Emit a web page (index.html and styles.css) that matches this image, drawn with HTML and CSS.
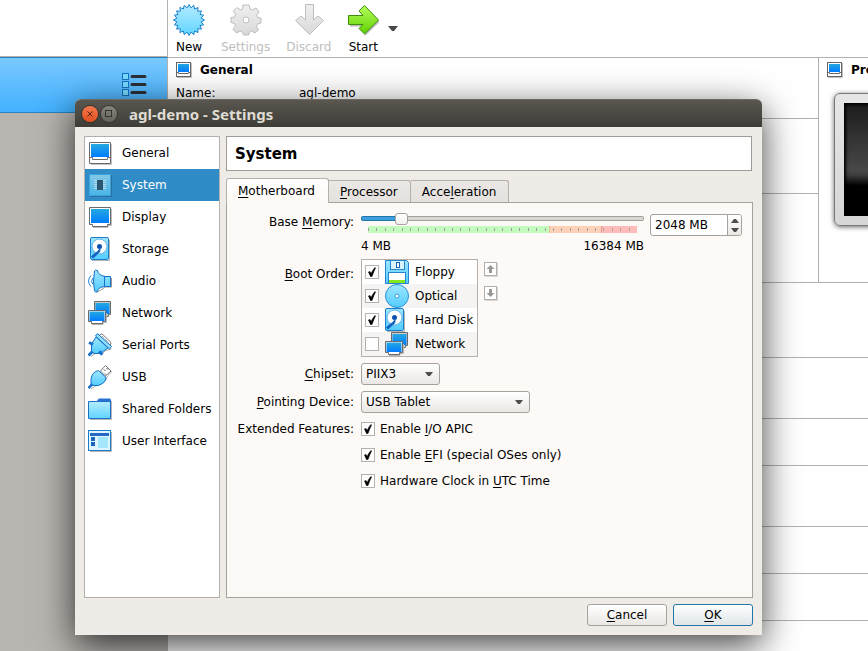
FILE: index.html
```html
<!DOCTYPE html>
<html lang="en">
<head>
<meta charset="utf-8">
<title>agl-demo - Settings</title>
<link rel="stylesheet" href="styles.css">
</head>
<body>
<svg class="defs" aria-hidden="true">
  <defs>
    <linearGradient id="screen" x1="0" y1="0" x2="0" y2="1"><stop offset="0" stop-color="#25a8e0"/><stop offset="1" stop-color="#007cff"/></linearGradient>
    <linearGradient id="sky" x1="0" y1="0" x2="0" y2="1"><stop offset="0" stop-color="#9fe6ff"/><stop offset="1" stop-color="#52ccff"/></linearGradient>
    <linearGradient id="pale" x1="0" y1="0" x2="0" y2="1"><stop offset="0" stop-color="#b4ecff"/><stop offset="1" stop-color="#60d4ff"/></linearGradient>
    <linearGradient id="lime" x1="0" y1="0" x2="0" y2="1"><stop offset="0" stop-color="#b6ff5c"/><stop offset="1" stop-color="#5fd000"/></linearGradient>
    <linearGradient id="ash" x1="0" y1="0" x2="0" y2="1"><stop offset="0" stop-color="#efefef"/><stop offset="1" stop-color="#d9d9d9"/></linearGradient>
  </defs>
  <symbol id="i-general" viewBox="0 0 24 24">
    <path d="M3 23.500H23.500V3" fill="none" stroke="#c4c4c4"/>
    <path d="M1.500 1.500H22.500V22.500H1.500Z" fill="#fff" stroke="#6a6a6a"/>
    <rect x="3" y="3" width="18" height="13" fill="url(#screen)"/>
    <path d="M1.500 16.500H4.500V18.500H19.500V16.500H22.500" fill="none" stroke="#6a6a6a"/>
  </symbol>
  <symbol id="i-system" viewBox="0 0 24 24">
    <rect x="2" y="2" width="22" height="22" fill="#2b6fa0"/>
    <rect x="1.500" y="1.500" width="21" height="21" fill="url(#sky)" fill-opacity=".75" stroke="#38a6dc"/>
    <path d="M6 7.500H18M6 9.500H18M6 11.500H18M6 13.500H18M6 15.500H18" stroke="#b9dcec"/>
    <rect x="9" y="7" width="6" height="10" fill="#2c5570"/>
  </symbol>
  <symbol id="i-display" viewBox="0 0 24 24">
    <path d="M5 22.500H20V20.500H23.500V4" fill="none" stroke="#bcbcbc"/>
    <path d="M1.500 2.500H22.500V19.500H19.500V21.500H4.500V19.500H1.500Z" fill="#fff" stroke="#6a6a6a"/>
    <rect x="3" y="4" width="18" height="14" fill="url(#screen)"/>
  </symbol>
  <symbol id="i-storage" viewBox="0 0 24 24">
    <path d="M4 23.500H21.500V3" fill="none" stroke="#b5b5b5"/>
    <rect x="2.500" y=".500" width="18" height="22" rx="1.500" fill="url(#sky)" stroke="#1c7cc8"/>
    <circle cx="11.500" cy="9.500" r="7.500" fill="#fff" stroke="#5ab4e8"/>
    <circle cx="11.500" cy="9.500" r="2.500" fill="#0c50b0"/>
    <path d="M12 11.500Q13 15 9 17.500L5 21 3.500 19.500 7.500 16Q10 15 12 11.500Z" fill="#1764c0" stroke="#1764c0"/>
  </symbol>
  <symbol id="i-audio" viewBox="0 0 24 24">
    <path d="M3 6.500Q-2 12 3 17.500M5 9Q2 12 5 15.500" fill="none" stroke="#2484d8"/>
    <path d="M8.500 23.500L17.500 18H23.500V9" fill="none" stroke="#9a9a9a"/>
    <path d="M6.500 2Q7.500 .500 9.500 1.500Q10 6 17 7.500H22.500V17.500H17Q10 18 9.500 22.500Q7 23.500 6.500 22Q4.500 12 6.500 2Z" fill="url(#sky)" stroke="#1771c8"/>
    <path d="M16.500 7.500V17.500" stroke="#1771c8"/>
  </symbol>
  <symbol id="i-network" viewBox="0 0 24 24">
    <path d="M6.500 .500H22.500V13.500H20.500V15.500H8.500V13.500H6.500Z" fill="#ccc" stroke="#6a6a6a"/>
    <rect x="7.500" y="2" width="14" height="11" fill="url(#screen)"/>
    <path d="M4 23.500H15V21.500H18.500V12" fill="none" stroke="#b5b5b5"/>
    <path d="M.500 9.500H17.500V20.500H14.500V22.500H3.500V20.500H.500Z" fill="#fff" stroke="#6a6a6a"/>
    <rect x="1.500" y="10.500" width="15" height="9.500" fill="url(#screen)"/>
  </symbol>
  <symbol id="i-serial" viewBox="0 0 24 24">
    <path d="M3 23.500L7 20.500H14L18 17.500 23.500 16" fill="none" stroke="#aaa"/>
    <path d="M11 2.500L14 .800 23 9.500 22 13.500Z" fill="#fff" stroke="#777"/>
    <path d="M14 3L21 10" stroke="#777" stroke-dasharray="1 1"/>
    <path d="M8 4L20 15 14 19 11 20.500H6L3.500 18.500V11Z" fill="url(#sky)" stroke="#1771c8"/>
    <path d="M1 9.500L5 11.500M11 18.500L14.500 21.500" stroke="#1771c8" stroke-width="3"/>
    <path d="M9.500 .500L23.500 13.500 21.500 16 7.500 3Z" fill="#8fe0ff" stroke="#1771c8" stroke-linejoin="round"/>
    <path d="M.500 22.500L4.500 18.500" stroke="#1771c8" stroke-width="3"/>
  </symbol>
  <symbol id="i-usb" viewBox="0 0 24 24">
    <path d="M3 24L9 20Q18 18 19 12L24 6" fill="none" stroke="#b5b5b5"/>
    <path d="M12.500 6L17.500 .500 23 6 17.500 11Z" fill="#fff" stroke="#777"/>
    <path d="M16 4.500L17.500 6M18.500 3L20 4.500M17 8.500L18 9.500" stroke="#444"/>
    <path d="M10.500 5.500L18 12.500Q18 18 10 20.500H5L3 18.500V14Q4 7 10.500 5.500Z" fill="url(#sky)" stroke="#1771c8"/>
    <path d="M.500 23L4.500 19" stroke="#1771c8" stroke-width="2.500"/>
  </symbol>
  <symbol id="i-folder" viewBox="0 0 24 24">
    <path d="M2 22.500H23.500V4" fill="none" stroke="#b5b5b5"/>
    <path d="M9 5V3.500L11 1.500H22L23 3V6H9Z" fill="#2a72d0"/>
    <path d="M.500 4.500H22.500V21.500H.500Z" fill="url(#pale)" stroke="#1e6fca"/>
  </symbol>
  <symbol id="i-ui" viewBox="0 0 24 24">
    <path d="M2 22.500H23.500V3" fill="none" stroke="#b5b5b5"/>
    <rect x=".500" y="1.500" width="22" height="20" fill="#def6ff" stroke="#1d7bcc"/>
    <rect x="2" y="4" width="19" height="3" fill="#2668c4"/>
    <rect x="3" y="8" width="4" height="4" fill="#1f62c0"/><rect x="3" y="13" width="4" height="4" fill="#1f62c0"/>
    <rect x="10" y="8" width="10" height="11" fill="#a5e6ff"/>
  </symbol>
  <symbol id="i-floppy" viewBox="0 0 24 24">
    <path d="M.500 .500H21.500L23.500 2.500V23.500H.500Z" fill="url(#sky)" stroke="#2585d0"/>
    <rect x="5.500" y=".500" width="14" height="9" fill="#d9f6ff" stroke="#2585d0"/>
    <rect x="11.500" y="2.500" width="3" height="5" fill="#fff" stroke="#1764c0"/>
    <rect x="3.500" y="12.500" width="17" height="11" fill="#fff" stroke="#2585d0"/>
    <rect x="4" y="20" width="16" height="3" fill="#84e820"/>
  </symbol>
  <symbol id="i-optical" viewBox="0 0 24 24">
    <circle cx="12" cy="12" r="11.500" fill="url(#sky)" stroke="#2f8fd4"/>
    <circle cx="12" cy="12" r="2" fill="#fff" stroke="#3c9bd8"/>
  </symbol>
  <symbol id="i-details" viewBox="0 0 16 16">
    <path d="M1 15.500H15.500V1" fill="none" stroke="#c0c0c0"/>
    <rect x=".500" y=".500" width="14" height="14" fill="#fff" stroke="#666"/>
    <rect x="2" y="2" width="11" height="8" fill="url(#screen)"/>
    <path d="M.500 10.500H2.500V11.500H12.500V10.500H14.500" fill="none" stroke="#666"/>
  </symbol>
</svg>

<div class="manager">
  <aside class="machines">
    <div class="machines-top"></div>
    <div class="machine">
      <svg width="26" height="24" viewBox="0 0 26 24" aria-label="Details">
        <g fill="#7ddcff" stroke="#1274c4"><rect x="1.500" y=".500" width="6" height="6"/><rect x="1.500" y="8.500" width="6" height="6"/><rect x="1.500" y="16.500" width="6" height="6"/></g>
        <path d="M11 3.500H24M11 11.500H24M11 19.500H24" stroke="#2b2f33" stroke-width="3" stroke-linecap="round"/>
      </svg>
    </div>
  </aside>
  <main class="details">
    <nav class="toolbar">
      <button type="button">
        <svg width="32" height="32" viewBox="0 0 32 32"><path d="M16 .500L17.900 3.900 20.800 1.300 21.600 5 25.100 3.500 24.700 7.300 28.500 6.900 27 10.400 30.700 11.200 28.100 14.100 31.500 16 28.100 17.900 30.700 20.800 27 21.600 28.500 25.100 24.700 24.700 25.100 28.500 21.600 27 20.800 30.700 17.900 28.100 16 31.500 14.100 28.100 11.200 30.700 10.400 27 6.900 28.500 7.300 24.700 3.500 25.100 5 21.600 1.300 20.800 3.900 17.900 .500 16 3.900 14.100 1.300 11.200 5 10.400 3.500 6.900 7.300 7.300 6.900 3.500 10.400 5 11.200 1.300 14.100 3.900Z" fill="url(#pale)" stroke="#1c80cc" stroke-linejoin="round"/></svg>
        New
      </button>
      <button type="button" disabled>
        <svg width="32" height="32" viewBox="0 0 32 32"><path fill-rule="evenodd" d="M13 1H19L20 5 22.500 6 26 4 29 8 26.500 11 27.500 13.500 31 14V19L27.500 20 26.500 22.500 28.500 26 25 29 21.500 27 19.500 28 18.500 31H13.500L12.500 28 10 27 6.500 29 3 25.500 5.500 22 4.500 19.500 1 18.500V13.500L4.500 13 5.500 10.500 3.500 7 7 3.500 10.500 6 12.500 5ZM16 13A3 3 0 1 0 16 19 3 3 0 1 0 16 13Z" fill="url(#ash)" stroke="#bdbdbd" stroke-linejoin="round"/></svg>
        Settings
      </button>
      <button type="button" disabled>
        <svg width="32" height="32" viewBox="0 0 32 32"><path d="M12.500 .500H20.500V16L25 12 30.500 16.500 16.500 30.500 2.500 16.500 8 12 12.500 16Z" fill="url(#ash)" stroke="#bdbdbd"/></svg>
        Discard
      </button>
      <button type="button">
        <svg width="32" height="32" viewBox="0 0 32 32"><path d="M3 21.500H16M17.500 31L32 17" stroke="#bbb" stroke-width="2" fill="none"/><path d="M1.500 11.500H16L12 7 17.500 1.500 31.500 16 17.500 30 12 24.500 16 20.500H1.500Z" fill="url(#lime)" stroke="#3f8c0c"/></svg>
        Start
      </button>
      <button type="button" class="drop" aria-label="Start options"><svg width="10" height="6" viewBox="0 0 10 6"><path d="M0 0H10L6 5H4Z" fill="#4a4a4a"/></svg></button>
    </nav>
    <div class="top-panes">
      <div class="pane-col">
        <section class="pane general">
          <h2><svg width="16" height="16"><use href="#i-details"/></svg>General</h2>
          <dl><dt>Name:</dt><dd>agl-demo</dd></dl>
        </section>
        <section class="pane h75"></section>
        <section class="pane grow"></section>
      </div>
      <section class="preview">
        <h2><svg width="16" height="16"><use href="#i-details"/></svg>Preview</h2>
        <div class="monitor"><div class="monitor-screen"></div></div>
      </section>
    </div>
    <section class="pane h75"></section>
    <section class="pane h61"></section>
    <section class="pane h47"></section>
    <section class="pane h61"></section>
    <section class="pane h47"></section>
    <section class="pane h47"></section>
  </main>
</div>

<div class="dialog" role="dialog" aria-labelledby="dlg-title">
  <header class="titlebar">
    <button type="button" class="wm close" aria-label="Close"><svg width="16" height="16" viewBox="0 0 16 16"><path d="M5.500 5.500L10.500 10.500M10.500 5.500L5.500 10.500" stroke="#5c2210"/></svg></button>
    <button type="button" class="wm" aria-label="Maximize"><svg width="16" height="16" viewBox="0 0 16 16"><rect x="4.500" y="4.500" width="6" height="6" fill="none" stroke="#35342f"/></svg></button>
    <h1 id="dlg-title">agl-demo - Settings</h1>
  </header>
  <div class="dialog-body">
    <div class="columns">
      <nav class="categories">
        <a href="#general"><svg><use href="#i-general"/></svg>General</a>
        <a href="#system" class="selected"><svg><use href="#i-system"/></svg>System</a>
        <a href="#display"><svg><use href="#i-display"/></svg>Display</a>
        <a href="#storage"><svg><use href="#i-storage"/></svg>Storage</a>
        <a href="#audio"><svg><use href="#i-audio"/></svg>Audio</a>
        <a href="#network"><svg><use href="#i-network"/></svg>Network</a>
        <a href="#serial"><svg><use href="#i-serial"/></svg>Serial Ports</a>
        <a href="#usb"><svg><use href="#i-usb"/></svg>USB</a>
        <a href="#folders"><svg><use href="#i-folder"/></svg>Shared Folders</a>
        <a href="#ui"><svg><use href="#i-ui"/></svg>User Interface</a>
      </nav>
      <div class="page">
        <h2 class="page-title">System</h2>
        <div class="tabs" role="tablist">
          <button type="button" role="tab" class="tab active" aria-selected="true"><span><u>M</u>otherboard</span></button>
          <button type="button" role="tab" class="tab"><span><u>P</u>rocessor</span></button>
          <button type="button" role="tab" class="tab"><span>Acce<u>l</u>eration</span></button>
        </div>
        <form class="form">
          <label class="lbl lbl-mem" for="mem">Base <u>M</u>emory:</label>
          <div class="memory">
            <div class="mem-slider">
              <input type="range" id="mem" min="4" max="16384" value="2048">
              <div class="scale"><i class="ok"></i><i class="warn"></i><i class="bad"></i></div>
              <div class="bounds"><span>4 MB</span><span>16384 MB</span></div>
            </div>
            <div class="spin">
              <input type="text" value="2048 MB" aria-label="Base memory size">
              <div class="spin-buttons">
                <button type="button" aria-label="Increase"><svg width="8" height="5" viewBox="0 0 8 5"><path d="M0 5L3 1H5L8 5Z" fill="#4f4e4b"/></svg></button>
                <button type="button" aria-label="Decrease"><svg width="8" height="5" viewBox="0 0 8 5"><path d="M0 0L3 4H5L8 0Z" fill="#4f4e4b"/></svg></button>
              </div>
            </div>
          </div>

          <span class="lbl lbl-boot"><u>B</u>oot Order:</span>
          <div class="boot">
            <div class="boot-list">
              <label><input type="checkbox" checked><svg><use href="#i-floppy"/></svg>Floppy</label>
              <label><input type="checkbox" checked><svg><use href="#i-optical"/></svg>Optical</label>
              <label><input type="checkbox" checked><svg><use href="#i-storage" x="-2"/></svg>Hard Disk</label>
              <label><input type="checkbox"><svg><use href="#i-network"/></svg>Network</label>
            </div>
            <div class="movers">
              <button type="button" aria-label="Move up"><svg width="14" height="15" viewBox="0 0 14 15"><path d="M1 14.500H13.500V1" fill="none" stroke="#d8d6d4"/><rect x=".500" y=".500" width="12" height="13" fill="#fff" stroke="#b3afac"/><path d="M6.500 3L10.500 7H8V11H5V7H2.500Z" fill="#9a9794"/></svg></button>
              <button type="button" aria-label="Move down"><svg width="14" height="15" viewBox="0 0 14 15"><path d="M1 14.500H13.500V1" fill="none" stroke="#d8d6d4"/><rect x=".500" y=".500" width="12" height="13" fill="#fff" stroke="#b3afac"/><path d="M6.500 11L10.500 7H8V3H5V7H2.500Z" fill="#9a9794"/></svg></button>
            </div>
          </div>

          <label class="lbl" for="chipset"><u>C</u>hipset:</label>
          <select id="chipset" class="chipset"><option>PIIX3</option><option>ICH9</option></select>

          <label class="lbl" for="pointing"><u>P</u>ointing Device:</label>
          <select id="pointing" class="pointing"><option>USB Tablet</option><option>PS/2 Mouse</option></select>

          <span class="lbl">Extended Features:</span>
          <label class="check"><input type="checkbox" checked><span>Enable <u>I</u>/O APIC</span></label>
          <label class="check"><input type="checkbox" checked><span>Enable <u>E</u>FI (special OSes only)</span></label>
          <label class="check"><input type="checkbox" checked><span>Hardware Clock in <u>U</u>TC Time</span></label>
        </form>
      </div>
    </div>
    <footer class="actions">
      <button type="button" class="btn"><span><u>C</u>ancel</span></button>
      <button type="button" class="btn default"><span><u>O</u>K</span></button>
    </footer>
  </div>
</div>
</body>
</html>
```
FILE: styles.css
```css
* { box-sizing: border-box; }

body {
  margin: 0;
  height: 100vh;
  overflow: hidden;
  position: relative;
  font: 12px/14px "DejaVu Sans", sans-serif;
  color: #000;
  background: #fff;
}

button, input, select { font: inherit; color: inherit; margin: 0; padding: 0; }
button { background: none; border: 0; }
svg { display: block; flex: none; }
h1, h2, dl, dd { margin: 0; }
u { text-underline-offset: 2px; text-decoration-thickness: 1px; text-decoration-skip-ink: none; }
.defs { position: absolute; width: 0; height: 0; }

/* Manager window */
.manager { display: flex; min-height: 100vh; }
.machines { flex: 0 0 168px; background: #b8b4b0; display: flex; flex-direction: column; }
.machines-top { height: 57px; background: #fff; border-right: 1px solid #b4b0ac; border-bottom: 1px solid #b4b0ac; }
.machine {
  height: 56px;
  display: flex;
  justify-content: flex-end;
  padding: 15px 20px 0 0;
  background: linear-gradient(#79c8ff, #42b1ff);
  border-top: 1px solid #2982bd;
  border-bottom: 1px solid #2982bd;
  border-right: 1px solid #b4b0ac;
}
.details { flex: 1; min-width: 0; display: flex; flex-direction: column; }
.toolbar { display: flex; gap: 16px; height: 58px; padding: 4px 5px 0; border-bottom: 1px solid #b4b0ac; }
.toolbar button { min-width: 32px; display: flex; flex-direction: column; align-items: center; gap: 4px; height: 50px; white-space: nowrap; }
.toolbar button:disabled { color: #bebebe; }
.toolbar .drop { min-width: 10px; margin-left: -7px; padding-top: 22px; }

.top-panes { display: flex; height: 225px; border-bottom: 1px solid #b4b0ac; }
.pane-col { flex: 1; display: flex; flex-direction: column; border-right: 1px solid #b4b0ac; }
.pane { flex: none; border-bottom: 1px solid #b4b0ac; }
.pane.general { height: 61px; padding: 4px 8px; }
.pane.grow { flex: 1; border: 0; }
.h75 { height: 75px; }
.h61 { height: 61px; }
.h47 { height: 47px; }
.pane h2, .preview h2 { display: flex; align-items: center; gap: 8px; font-size: 12px; line-height: 16px; }
.pane dl { display: grid; grid-template-columns: 123px 1fr; margin-top: 8px; }
.preview { flex: 0 0 49px; overflow: hidden; padding: 4px 0 0 8px; }
.preview h2 { width: 120px; }
.monitor {
  width: 180px;
  height: 133px;
  margin: 15px 0 0 7px;
  padding: 9px;
  border: 1px solid #777;
  border-radius: 6px;
  background: linear-gradient(#e6e6e6, #d6d6d6);
  box-shadow: 0 1px 5px rgba(0, 0, 0, .6);
}
.monitor-screen {
  height: 100%;
  background: linear-gradient(#1c1c1c, #484848 60%, #3c3c3c 64%, #000 73%);
  box-shadow: inset 2px 2px 3px #000;
}

/* Settings dialog */
.dialog {
  position: absolute;
  top: 99px;
  left: 75px;
  right: 106px;
  bottom: 16px;
  display: flex;
  flex-direction: column;
  border-radius: 6px 6px 0 0;
  background: #efebe7;
  box-shadow: 0 10px 36px rgba(0, 0, 0, .75);
}
.titlebar {
  display: flex;
  align-items: center;
  gap: 3px;
  height: 28px;
  padding: 1px 7px 0;
  border-radius: 6px 6px 0 0;
  background: linear-gradient(#59574f, #3d3c37);
  border-top: 1px solid #6b6960;
}
.titlebar h1 { margin-left: 9px; font: bold 15px/18px "Noto Sans", sans-serif; color: #dfdbd2; }
.wm { width: 16px; height: 16px; border-radius: 50%; background: linear-gradient(#86847c, #65635c); box-shadow: 0 0 0 1px #35342f; }
.wm.close { background: linear-gradient(#f4784e, #e0501f); }

.dialog-body { flex: 1; display: flex; flex-direction: column; gap: 6px; padding: 9px; min-height: 0; }
.columns { flex: 1; display: flex; gap: 6px; min-height: 0; }
.categories { flex: 0 0 136px; background: #fff; border: 1px solid #b4b0ac; }
.categories a { display: flex; align-items: center; gap: 10px; height: 32px; padding-left: 3px; color: #000; text-decoration: none; }
.categories svg, .boot-list svg { width: 24px; height: 24px; }
.categories .selected { background: #308cc6; color: #fff; }

.page { flex: 1; min-width: 0; display: flex; flex-direction: column; }
.page-title { height: 35px; padding: 0 8px; margin-right: 1px; background: #fff; border: 1px solid #9f9c98; font-size: 15px; line-height: 34px; }
.tabs { display: flex; align-items: flex-end; height: 31px; }
.tab { height: 22px; padding: 0 12px 0 11px; background: linear-gradient(#ebe7e4, #e5e1de); border: 1px solid #b4b0ac; border-left: 0; border-bottom: 0; border-radius: 0 3px 0 0; }
.tab.active { position: relative; height: 25px; margin-bottom: -1px; padding: 0 13px 1px 11px; background: linear-gradient(#fff, #fdf9f6); border-left: 1px solid #b4b0ac; border-radius: 3px 3px 0 0; }

.form {
  flex: 1;
  display: grid;
  grid-template-columns: 127px 1fr;
  align-content: start;
  column-gap: 7px;
  row-gap: 6px;
  padding: 10px 10px 10px 0;
  background: #fdf9f6;
  border: 1px solid #a5a29e;
}
.lbl { text-align: right; align-self: center; white-space: nowrap; grid-column: 1; }
.lbl-mem { align-self: start; padding-top: 2px; }
.lbl-boot { align-self: start; padding-top: 8px; }
.memory, .boot { display: flex; gap: 6px; align-items: flex-start; }
.mem-slider { flex: 1; height: 40px; display: flex; flex-direction: column; }
input[type="range"] { appearance: none; width: 100%; height: 10px; background: none; }
input[type="range"]::-webkit-slider-runnable-track {
  height: 5px;
  border: 1px solid #a5a29e;
  border-radius: 2px;
  background: linear-gradient(90deg, #3b9fe0 13%, #dad7d4 13%) padding-box, linear-gradient(90deg, #2376a8 13%, #a5a29e 13%) border-box;
  border-color: transparent;
}
input[type="range"]::-webkit-slider-thumb {
  appearance: none;
  width: 13px;
  height: 12px;
  margin-top: -4px;
  border: 1px solid #a5a29e;
  border-radius: 3px;
  background: linear-gradient(#fff, #f2f0ee);
}
.scale {
  display: flex;
  height: 7px;
  margin: 3px 7px 0;
  position: relative;
}
.scale::after {
  content: "";
  position: absolute;
  inset: 2px 0;
  background: repeating-linear-gradient(90deg, #a3a19e 0 1px, transparent 1px calc(100% / 32));
}
.scale .ok { flex: 182; background: #c3fabe; }
.scale .warn { flex: 52; background: #fdd0b8; border-left: 1px solid #e4c48c; }
.scale .bad { flex: 35; background: #ffbcb8; border-left: 1px solid #f09a90; }
.bounds { display: flex; justify-content: space-between; margin-top: 6px; }

.spin { display: flex; width: 92px; height: 22px; margin-top: 1px; border: 1px solid #a5a29e; border-radius: 3px; background: #fff; overflow: hidden; }
.spin input { flex: 1; min-width: 0; border: 0; padding: 0 4px; background: none; outline: 0; }
.spin-buttons { width: 14px; border-left: 1px solid #a5a29e; display: flex; flex-direction: column; background: linear-gradient(#fff, #eae7e4); }
.spin-buttons button { flex: 1; display: flex; align-items: center; justify-content: center; }

.boot-list { width: 117px; border: 1px solid #b4b0ac; background: #fff; }
.boot-list label { display: flex; align-items: center; height: 24px; padding-left: 3px; white-space: nowrap; }
.boot-list label:nth-child(even) { background: #f5f4f2; }
.boot-list svg { margin: 0 6px; }
.movers { display: flex; flex-direction: column; gap: 9px; padding-top: 3px; }

input[type="checkbox"] {
  appearance: none;
  flex: none;
  width: 14px;
  height: 14px;
  border: 1px solid #b4b0ac;
  background: #fff;
}
input[type="checkbox"]:checked {
  background: #fff url("data:image/svg+xml,%3Csvg xmlns='http://www.w3.org/2000/svg' viewBox='0 0 12 12'%3E%3Cpath d='M2.500 6L4 5.500 5.200 7.500Q6.500 4 9 1.500L9.500 2Q7.500 6 6 10.500H4.500Z' fill='%23000' stroke='%23000' stroke-width='.600'/%3E%3C/svg%3E") center / 12px 12px;
}
.check { grid-column: 2; display: flex; align-items: center; gap: 5px; height: 20px; }

select {
  appearance: none;
  height: 22px;
  padding: 0 20px 1px 4px;
  border: 1px solid #a5a29e;
  border-radius: 3px;
  background:
    url("data:image/svg+xml,%3Csvg xmlns='http://www.w3.org/2000/svg' viewBox='0 0 8 5'%3E%3Cpath d='M0 0H8L5 4H3Z' fill='%234f4e4b'/%3E%3C/svg%3E") right 6px center / 8px 5px no-repeat,
    linear-gradient(#fff, #eae7e4);
}
.chipset { width: 79px; }
.pointing { width: 169px; }

.actions { display: flex; justify-content: flex-end; gap: 6px; }
.btn { width: 80px; height: 22px; border: 1px solid #a5a29e; border-radius: 3px; background: linear-gradient(#fff, #eae7e4); }
.btn.default { border-color: #2376a8; background: linear-gradient(#fff, #dfe5e8); }
```
